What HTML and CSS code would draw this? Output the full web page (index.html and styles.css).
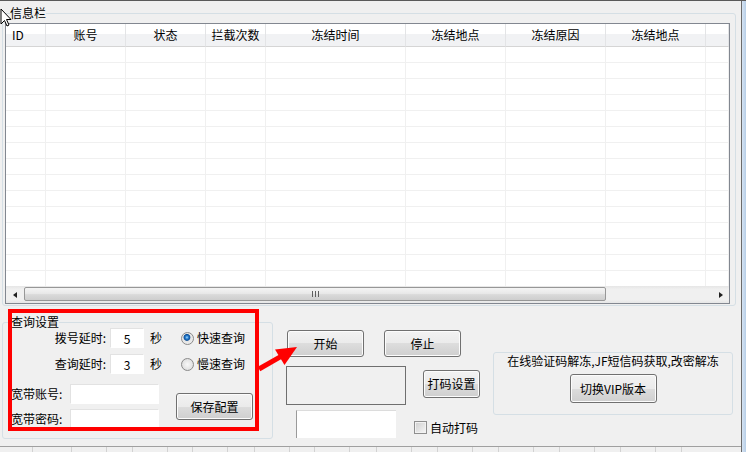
FILE: index.html
```html
<!DOCTYPE html>
<html>
<head>
  <meta charset="utf-8">
  <title>冻结查询</title>
  <link rel="stylesheet" href="styles.css">
</head>
<body>
  <div class="window">
    <fieldset class="group info">
      <legend>信息栏</legend>
      <div class="listview">
        <div class="list-area">
          <table class="grid">
            <colgroup>
              <col style="width:40px"><col style="width:80px"><col style="width:80px"><col style="width:60px">
              <col style="width:140px"><col style="width:100px"><col style="width:100px"><col style="width:100px"><col>
            </colgroup>
            <thead>
              <tr><th class="id">ID</th><th>账号</th><th>状态</th><th>拦截次数</th><th>冻结时间</th><th>冻结地点</th><th>冻结原因</th><th>冻结地点</th><th></th></tr>
            </thead>
            <tbody>
              <tr><td></td><td></td><td></td><td></td><td></td><td></td><td></td><td></td><td></td></tr>
              <tr><td></td><td></td><td></td><td></td><td></td><td></td><td></td><td></td><td></td></tr>
              <tr><td></td><td></td><td></td><td></td><td></td><td></td><td></td><td></td><td></td></tr>
              <tr><td></td><td></td><td></td><td></td><td></td><td></td><td></td><td></td><td></td></tr>
              <tr><td></td><td></td><td></td><td></td><td></td><td></td><td></td><td></td><td></td></tr>
              <tr><td></td><td></td><td></td><td></td><td></td><td></td><td></td><td></td><td></td></tr>
              <tr><td></td><td></td><td></td><td></td><td></td><td></td><td></td><td></td><td></td></tr>
              <tr><td></td><td></td><td></td><td></td><td></td><td></td><td></td><td></td><td></td></tr>
              <tr><td></td><td></td><td></td><td></td><td></td><td></td><td></td><td></td><td></td></tr>
              <tr><td></td><td></td><td></td><td></td><td></td><td></td><td></td><td></td><td></td></tr>
              <tr><td></td><td></td><td></td><td></td><td></td><td></td><td></td><td></td><td></td></tr>
              <tr><td></td><td></td><td></td><td></td><td></td><td></td><td></td><td></td><td></td></tr>
              <tr><td></td><td></td><td></td><td></td><td></td><td></td><td></td><td></td><td></td></tr>
              <tr><td></td><td></td><td></td><td></td><td></td><td></td><td></td><td></td><td></td></tr>
              <tr><td></td><td></td><td></td><td></td><td></td><td></td><td></td><td></td><td></td></tr>
            </tbody>
          </table>
        </div>
        <div class="hscroll">
          <span class="sb-btn"><i class="arrow-left"></i></span>
          <div class="sb-track"><span class="sb-thumb"><i class="grip"></i></span></div>
          <span class="sb-btn"><i class="arrow-right"></i></span>
        </div>
      </div>
    </fieldset>

    <div class="bottom">
      <fieldset class="group query">
        <legend>查询设置</legend>
        <div class="row">
          <label class="lbl-r" for="dial-delay">拨号延时:</label>
          <input type="text" class="edit num" id="dial-delay" value="5">
          <span class="unit">秒</span>
          <span class="radio checked"><i></i>快速查询</span>
        </div>
        <div class="row row2">
          <label class="lbl-r" for="query-delay">查询延时:</label>
          <input type="text" class="edit num" id="query-delay" value="3">
          <span class="unit">秒</span>
          <span class="radio"><i></i>慢速查询</span>
        </div>
        <div class="acct">
          <div class="acct-fields">
            <div class="row">
              <label class="lbl-l" for="bb-user">宽带账号:</label>
              <input type="text" class="edit wide" id="bb-user">
            </div>
            <div class="row row4">
              <label class="lbl-l" for="bb-pass">宽带密码:</label>
              <input type="text" class="edit wide" id="bb-pass">
            </div>
          </div>
          <button type="button" class="btn save">保存配置</button>
        </div>
      </fieldset>

      <div class="middle">
        <div class="mrow">
          <button type="button" class="btn start">开始</button>
          <button type="button" class="btn stop">停止</button>
        </div>
        <div class="mrow mrow2">
          <div class="static-box"></div>
          <button type="button" class="btn captcha">打码设置</button>
        </div>
        <div class="mrow mrow3">
          <div class="white-box"></div>
          <span class="check"><i></i>自动打码</span>
        </div>
      </div>

      <div class="vip">
        <p>在线验证码解冻,JF短信码获取,改密解冻</p>
        <button type="button" class="btn vip-btn">切换VIP版本</button>
      </div>
    </div>

    <div class="statusbar">
      <span style="width:33px"></span><span style="width:39px"></span><span style="width:35px"></span><span style="width:26px"></span>
      <span style="width:35px"></span><span style="width:25px"></span><span style="width:35px"></span><span style="width:27px"></span>
      <span style="width:35px"></span><span style="width:25px"></span><span style="width:35px"></span><span style="width:27px"></span>
      <span style="width:35px"></span><span style="width:26px"></span><span style="width:35px"></span><span style="width:26px"></span>
      <span style="width:35px"></span><span style="width:26px"></span><span style="width:35px"></span><span style="width:26px"></span>
      <span style="width:35px"></span><span style="width:26px"></span>
    </div>
  </div>
  <div class="frame-edge"></div>

  <!-- annotation drawn over the dialog -->
  <div class="highlight"></div>
  <svg class="pointer-arrow" width="52" height="36" viewBox="0 0 52 36">
    <line x1="9" y1="30" x2="32" y2="16.8" stroke="#ff0000" stroke-width="5"/>
    <polygon points="47,8 34.5,26 25,10.5" fill="#ff0000"/>
  </svg>
  <svg class="cursor" width="13" height="20" viewBox="0 0 13 20">
    <path d="M1 1 V16 L4.5 12.5 L7 18 L9 17 L6.5 11.5 H11 Z" fill="#fff" stroke="#000" stroke-width="1" stroke-linejoin="round"/>
  </svg>
</body>
</html>
```

FILE: styles.css
```css
/* Base */
* {
  box-sizing: border-box;
}

body {
  margin: 0;
  width: 746px;
  height: 452px;
  overflow: hidden;
  position: relative;
  display: flex;
  background-color: #f0f0f0;
  border-top: 1px solid #5a5a5a;
  font: 12px/1 "Noto Sans CJK SC", "Liberation Sans", sans-serif;
  color: #000;
}

.window {
  width: 742px;
  display: flex;
  flex-direction: column;
  border-right: 1px solid #6b6b6b;
}

.frame-edge {
  flex: 1;
  background: linear-gradient(90deg, #d6e4f3, #b7cee7);
}

/* Group boxes */
.group {
  margin: 0;
  padding: 0;
  min-width: 0;
  border: 1px solid #d5dfe5;
  border-radius: 3px;
}

.group legend {
  padding: 0;
  line-height: 12px;
}

.info {
  margin: 6px 5px 0 2px;
  padding: 4px 5px 1px 2px;
}

.info legend {
  margin-left: 5px;
}

/* List view */
.listview {
  height: 281px;
  display: flex;
  flex-direction: column;
  border: 1px solid #828790;
  background-color: #fff;
}

.list-area {
  flex: 1;
  overflow: hidden;
}

.grid {
  width: 100%;
  table-layout: fixed;
  border-collapse: separate;
  border-spacing: 0;
}

.grid thead tr {
  height: 23px;
}

.grid th {
  padding: 0;
  font-weight: normal;
  text-align: center;
  white-space: nowrap;
  border-right: 1px solid #e3e4e6;
  border-bottom: 1px solid #d5d5d5;
  background: linear-gradient(#fff 0, #fff 45%, #f1f2f4 45%, #f1f2f4 100%);
}

.grid th.id {
  text-align: left;
  padding-left: 6px;
}

.grid tbody tr {
  height: 16px;
}

.grid td {
  padding: 0;
  border-right: 1px solid #f0f0f0;
  border-bottom: 1px solid #f0f0f0;
}

/* Horizontal scrollbar */
.hscroll {
  height: 17px;
  display: flex;
  background: linear-gradient(#e6e6e6, #f0f0f0 20%, #f0f0f0 80%, #e6e6e6);
}

.sb-btn {
  width: 17px;
  display: flex;
  align-items: center;
  justify-content: center;
}

.arrow-left {
  border-top: 3px solid transparent;
  border-bottom: 3px solid transparent;
  border-right: 4px solid #202020;
}

.arrow-right {
  border-top: 3px solid transparent;
  border-bottom: 3px solid transparent;
  border-left: 4px solid #202020;
}

.sb-track {
  flex: 1;
}

.sb-thumb {
  width: 582px;
  height: 14px;
  margin: 1px 0 0 1px;
  display: flex;
  align-items: center;
  justify-content: center;
  border: 1px solid #979797;
  border-radius: 2px;
  background: linear-gradient(#f4f4f4, #e9e9e9 45%, #dadada 55%, #cecece);
}

.grip {
  width: 7px;
  height: 6px;
  background: repeating-linear-gradient(90deg, #5e5e5e 0 1px, transparent 1px 3px);
}

/* Bottom area */
.bottom {
  display: flex;
  align-items: flex-start;
}

.query {
  width: 271px;
  margin: 10px 0 0 2px;
  padding: 0 0 9px 8px;
}

.row {
  display: flex;
  align-items: center;
  height: 20px;
}

.row2 {
  margin-top: 6px;
}

.row4 {
  margin-top: 5px;
}

.lbl-r {
  width: 95px;
  margin-right: 4px;
  text-align: right;
}

.lbl-l {
  width: 59px;
}

.edit {
  font: inherit;
  padding: 0;
  outline: none;
  background-color: #fff;
  border: 1px solid #fff;
  border-top-color: #e2e2e2;
  border-left-color: #e2e2e2;
}

.num {
  width: 34px;
  height: 20px;
  text-align: center;
}

.wide {
  width: 89px;
  height: 20px;
}

.unit {
  margin-left: 6px;
}

.radio {
  margin-left: 19px;
  display: flex;
  align-items: center;
}

.radio i {
  width: 13px;
  height: 13px;
  margin-right: 3px;
  border: 1px solid #8a8a8a;
  border-radius: 50%;
  background: radial-gradient(circle, #f8f8f8, #d6d6d6);
}

.radio.checked i {
  background: radial-gradient(circle at 45% 40%, #a6dcff 0, #2b80d1 1.5px, #0c4f98 3px, #e4e4e4 3.8px, #f4f4f4 100%);
}

.acct {
  display: flex;
  margin-top: 10px;
}

/* Buttons */
.btn {
  font: inherit;
  color: #000;
  padding: 0;
  line-height: 1;
  border: 1px solid #707070;
  border-radius: 3px;
  background: linear-gradient(#f2f2f2 0, #ebebeb 50%, #dddddd 50%, #cfcfcf 100%);
  box-shadow: inset 0 0 0 1px #fcfcfc;
}

.save {
  width: 77px;
  height: 27px;
  margin: 9px 0 0 17px;
}

.middle {
  width: 195px;
  margin: 24px 0 0 13px;
}

.mrow {
  display: flex;
  align-items: flex-start;
}

.start,
.stop {
  width: 77px;
  height: 27px;
}

.start {
  margin-left: 1px;
}

.stop {
  margin-left: 20px;
}

.mrow2 {
  margin-top: 9px;
}

.static-box {
  width: 120px;
  height: 39px;
  border: 1px solid #6f6f6f;
}

.captcha {
  width: 57px;
  height: 28px;
  margin: 4px 0 0 17px;
}

.mrow3 {
  margin-top: 5px;
}

.white-box {
  width: 100px;
  height: 28px;
  margin-left: 10px;
  background-color: #fff;
  border-top: 1px solid #dcdcdc;
  border-left: 1px solid #9a9a9a;
}

.check {
  display: flex;
  align-items: center;
  margin: 11px 0 0 18px;
}

.check i {
  width: 13px;
  height: 13px;
  margin-right: 3px;
  border: 1px solid #8f8f8f;
  background: linear-gradient(135deg, #cfcfcf, #f7f7f7);
  box-shadow: inset 0 0 0 1px #f2f2f2;
}

.vip {
  width: 240px;
  height: 63px;
  margin: 46px 0 0 12px;
  padding-top: 1px;
  display: flex;
  flex-direction: column;
  align-items: center;
  border: 1px solid #d5dfe5;
  border-radius: 3px;
}

.vip p {
  margin: 0;
  line-height: 14px;
  white-space: nowrap;
}

.vip-btn {
  width: 87px;
  height: 29px;
  margin-top: 6px;
}

/* Status strip */
.statusbar {
  margin-top: auto;
  height: 6px;
  display: flex;
  border-top: 1px solid #a0a0a0;
}

.statusbar span {
  flex: none;
  border-right: 1px solid #d2d2d2;
}

/* Annotation overlays */
.highlight {
  position: absolute;
  left: 8px;
  top: 308px;
  width: 251px;
  height: 122px;
  border: 4px solid #ff0000;
}

.pointer-arrow {
  position: absolute;
  left: 250px;
  top: 338px;
}

.cursor {
  position: absolute;
  left: 0;
  top: 7px;
}
```
